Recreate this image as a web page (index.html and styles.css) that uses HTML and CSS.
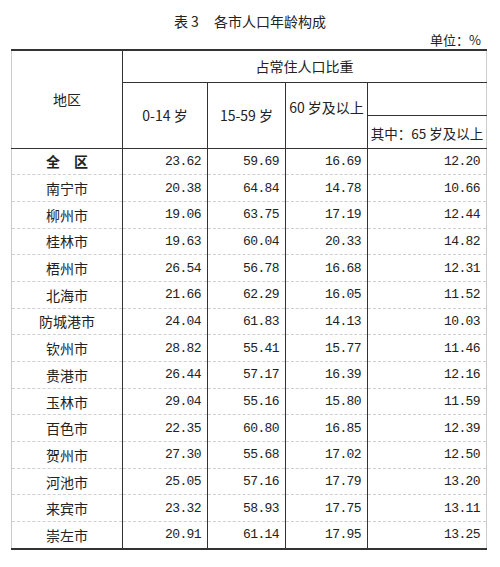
FILE: index.html
```html
<!DOCTYPE html>
<html lang="zh">
<head>
<meta charset="utf-8">
<link rel="stylesheet" href="styles.css">
</head>
<body>
<div class="title">表<span class="tnum">3</span>各市人口年龄构成</div>
<div class="unit">单位：%</div>
<table class="data">
  <colgroup>
    <col class="c1"><col class="c2"><col class="c3"><col class="c4"><col class="c5">
  </colgroup>
  <thead>
    <tr class="h1">
      <th rowspan="3" class="region-h">地区</th>
      <th colspan="4" class="share-h">占常住人口比重</th>
    </tr>
    <tr class="h2">
      <th rowspan="2">0-14 岁</th>
      <th rowspan="2">15-59 岁</th>
      <th rowspan="2" class="up">60 岁及以上</th>
      <th class="blank"></th>
    </tr>
    <tr class="h3">
      <th class="sub">其中：65 岁及以上</th>
    </tr>
  </thead>
  <tbody>
    <tr><td class="name bold">全&emsp;区</td><td>23.62</td><td>59.69</td><td>16.69</td><td>12.20</td></tr>
    <tr><td class="name">南宁市</td><td>20.38</td><td>64.84</td><td>14.78</td><td>10.66</td></tr>
    <tr><td class="name">柳州市</td><td>19.06</td><td>63.75</td><td>17.19</td><td>12.44</td></tr>
    <tr><td class="name">桂林市</td><td>19.63</td><td>60.04</td><td>20.33</td><td>14.82</td></tr>
    <tr><td class="name">梧州市</td><td>26.54</td><td>56.78</td><td>16.68</td><td>12.31</td></tr>
    <tr><td class="name">北海市</td><td>21.66</td><td>62.29</td><td>16.05</td><td>11.52</td></tr>
    <tr><td class="name">防城港市</td><td>24.04</td><td>61.83</td><td>14.13</td><td>10.03</td></tr>
    <tr><td class="name">钦州市</td><td>28.82</td><td>55.41</td><td>15.77</td><td>11.46</td></tr>
    <tr><td class="name">贵港市</td><td>26.44</td><td>57.17</td><td>16.39</td><td>12.16</td></tr>
    <tr><td class="name">玉林市</td><td>29.04</td><td>55.16</td><td>15.80</td><td>11.59</td></tr>
    <tr><td class="name">百色市</td><td>22.35</td><td>60.80</td><td>16.85</td><td>12.39</td></tr>
    <tr><td class="name">贺州市</td><td>27.30</td><td>55.68</td><td>17.02</td><td>12.50</td></tr>
    <tr><td class="name">河池市</td><td>25.05</td><td>57.16</td><td>17.79</td><td>13.20</td></tr>
    <tr><td class="name">来宾市</td><td>23.32</td><td>58.93</td><td>17.75</td><td>13.11</td></tr>
    <tr><td class="name">崇左市</td><td>20.91</td><td>61.14</td><td>17.95</td><td>13.25</td></tr>
  </tbody>
</table>
</body>
</html>
```

FILE: styles.css
```css
html, body {
  margin: 0;
  padding: 0;
  background: #ffffff;
}
body {
  width: 500px;
  height: 567px;
  font-family: "Noto Sans CJK SC", "Liberation Sans", sans-serif;
  color: #222222;
}
.title {
  padding-top: 12px;
  height: 19px;
  line-height: 18px;
  font-size: 14px;
  text-align: center;
  box-sizing: content-box;
}
.tnum {
  margin: 0 15px 0 3px;
}
.unit {
  height: 18px;
  line-height: 18px;
  font-size: 13px;
  text-align: right;
  padding-right: 19px;
}
.data {
  margin-left: 11px;
  width: 475px;
  border-collapse: collapse;
  table-layout: fixed;
  border-top: 2px solid #333333;
  border-bottom: 2px solid #333333;
  border-left: 1px solid #cccccc;
  border-right: 1px solid #cccccc;
}
.c1 { width: 111px; }
.c2 { width: 85px; }
.c3 { width: 78px; }
.c4 { width: 82px; }
.c5 { width: 119px; }
th {
  font-weight: normal;
  font-size: 14px;
  padding: 0;
  border-left: 1px solid #333333;
  border-bottom: 1px solid #333333;
  text-align: center;
  vertical-align: middle;
  white-space: nowrap;
}
th.region-h {
  border-left: 1px solid #cccccc;
}
.h1 { height: 32px; }
.h2 { height: 33px; }
.h3 { height: 33px; }
th.up {
  padding-bottom: 16px;
}
th.sub {
  font-size: 13.5px;
  padding-top: 2px;
}
td {
  height: 25.7px;
  padding: 0 6px 0 0;
  font-family: "Liberation Mono", monospace;
  font-size: 13px;
  letter-spacing: -0.6px;
  text-align: right;
  border-left: 1px solid #333333;
  border-bottom: 1px dashed #cfcfcf;
  white-space: nowrap;
}
td.name {
  font-family: "Noto Sans CJK SC", "Liberation Sans", sans-serif;
  font-size: 14px;
  letter-spacing: 0;
  text-align: center;
  padding: 0;
  border-left: 1px solid #cccccc;
}
td.bold {
  font-weight: bold;
}
tbody tr:first-child td {
  border-top: 1px solid #555555;
}
tbody tr:last-child td {
  border-bottom: 2px solid #333333;
}
```
